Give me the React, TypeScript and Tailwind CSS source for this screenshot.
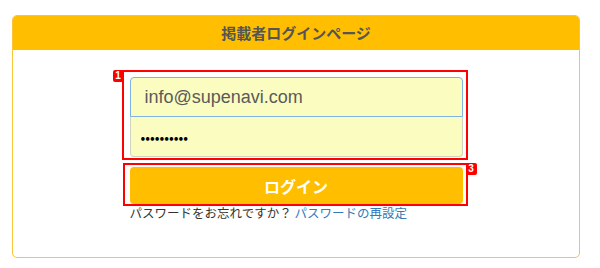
import React from 'react';

const jp = { fontFamily: '"Noto Sans CJK JP", "Noto Sans", "Liberation Sans", sans-serif' };

function Marker({ n, side }: { n: string; side: 'left' | 'right' }) {
    return (
        <span
            className={
                'absolute -top-[2px] flex h-[12px] w-[11px] items-center justify-center rounded-[2px] bg-[#ff0000] text-[10px] font-bold leading-none text-white ' +
                (side === 'left' ? '-left-[11px]' : '-right-[11px]')
            }
            style={{ fontFamily: '"Liberation Sans", sans-serif' }}
        >
            {n}
        </span>
    );
}

export default function App() {
    return (
        <div className="h-[268px] w-[600px] bg-white pt-[15px]" style={jp}>
            <div className="mx-[12px] flex w-[568px] flex-col rounded-[5px] border border-[#fcc43a] bg-white">
                <div className="flex h-[34px] items-center justify-center rounded-t-[4px] bg-[#ffbe00] text-[15px] font-bold text-[#555555]">
                    掲載者ログインページ
                </div>
                <div className="mx-auto flex w-[333px] flex-col gap-[10px] pb-[36px] pt-[27px]">
                    {/* inputs */}
                    <div className="relative flex flex-col">
                        <div className="pointer-events-none absolute -bottom-[3px] -left-[8px] -right-[5px] -top-[7px] border-2 border-[#ff0000]">
                            <Marker n="1" side="left" />
                        </div>
                        <input
                            className="block h-[40px] w-full rounded-t-[4px] border border-[#7fb3e4] bg-[#fafcc0] px-[14px] text-[18px] text-[#5a5a5a] outline-none"
                            style={{ fontFamily: '"Liberation Sans", sans-serif' }}
                            defaultValue="info@supenavi.com"
                        />
                        <input
                            type="password"
                            className="block h-[40px] w-full rounded-b-[4px] border border-t-0 border-[#d2d2c0] bg-[#fafcc0] px-[10px] text-[14px] text-black outline-none"
                            defaultValue="abcdefghij"
                        />
                    </div>
                    {/* button + reminder */}
                    <div className="flex flex-col">
                        <div className="relative">
                            <div className="pointer-events-none absolute -bottom-[2px] -left-[7px] -right-[5px] -top-[4px] border-2 border-[#ff0000]">
                                <Marker n="3" side="right" />
                            </div>
                            <button className="flex h-[37px] w-full items-center justify-center rounded-[4px] bg-[#ffbe00] text-[16px] font-bold text-white">
                                ログイン
                            </button>
                        </div>
                        <div className="text-[12.5px] leading-[17px] text-[#333333]">
                            パスワードをお忘れですか？ <a className="text-[#337ab7]">パスワードの再設定</a>
                        </div>
                    </div>
                </div>
            </div>
        </div>
    );
}
